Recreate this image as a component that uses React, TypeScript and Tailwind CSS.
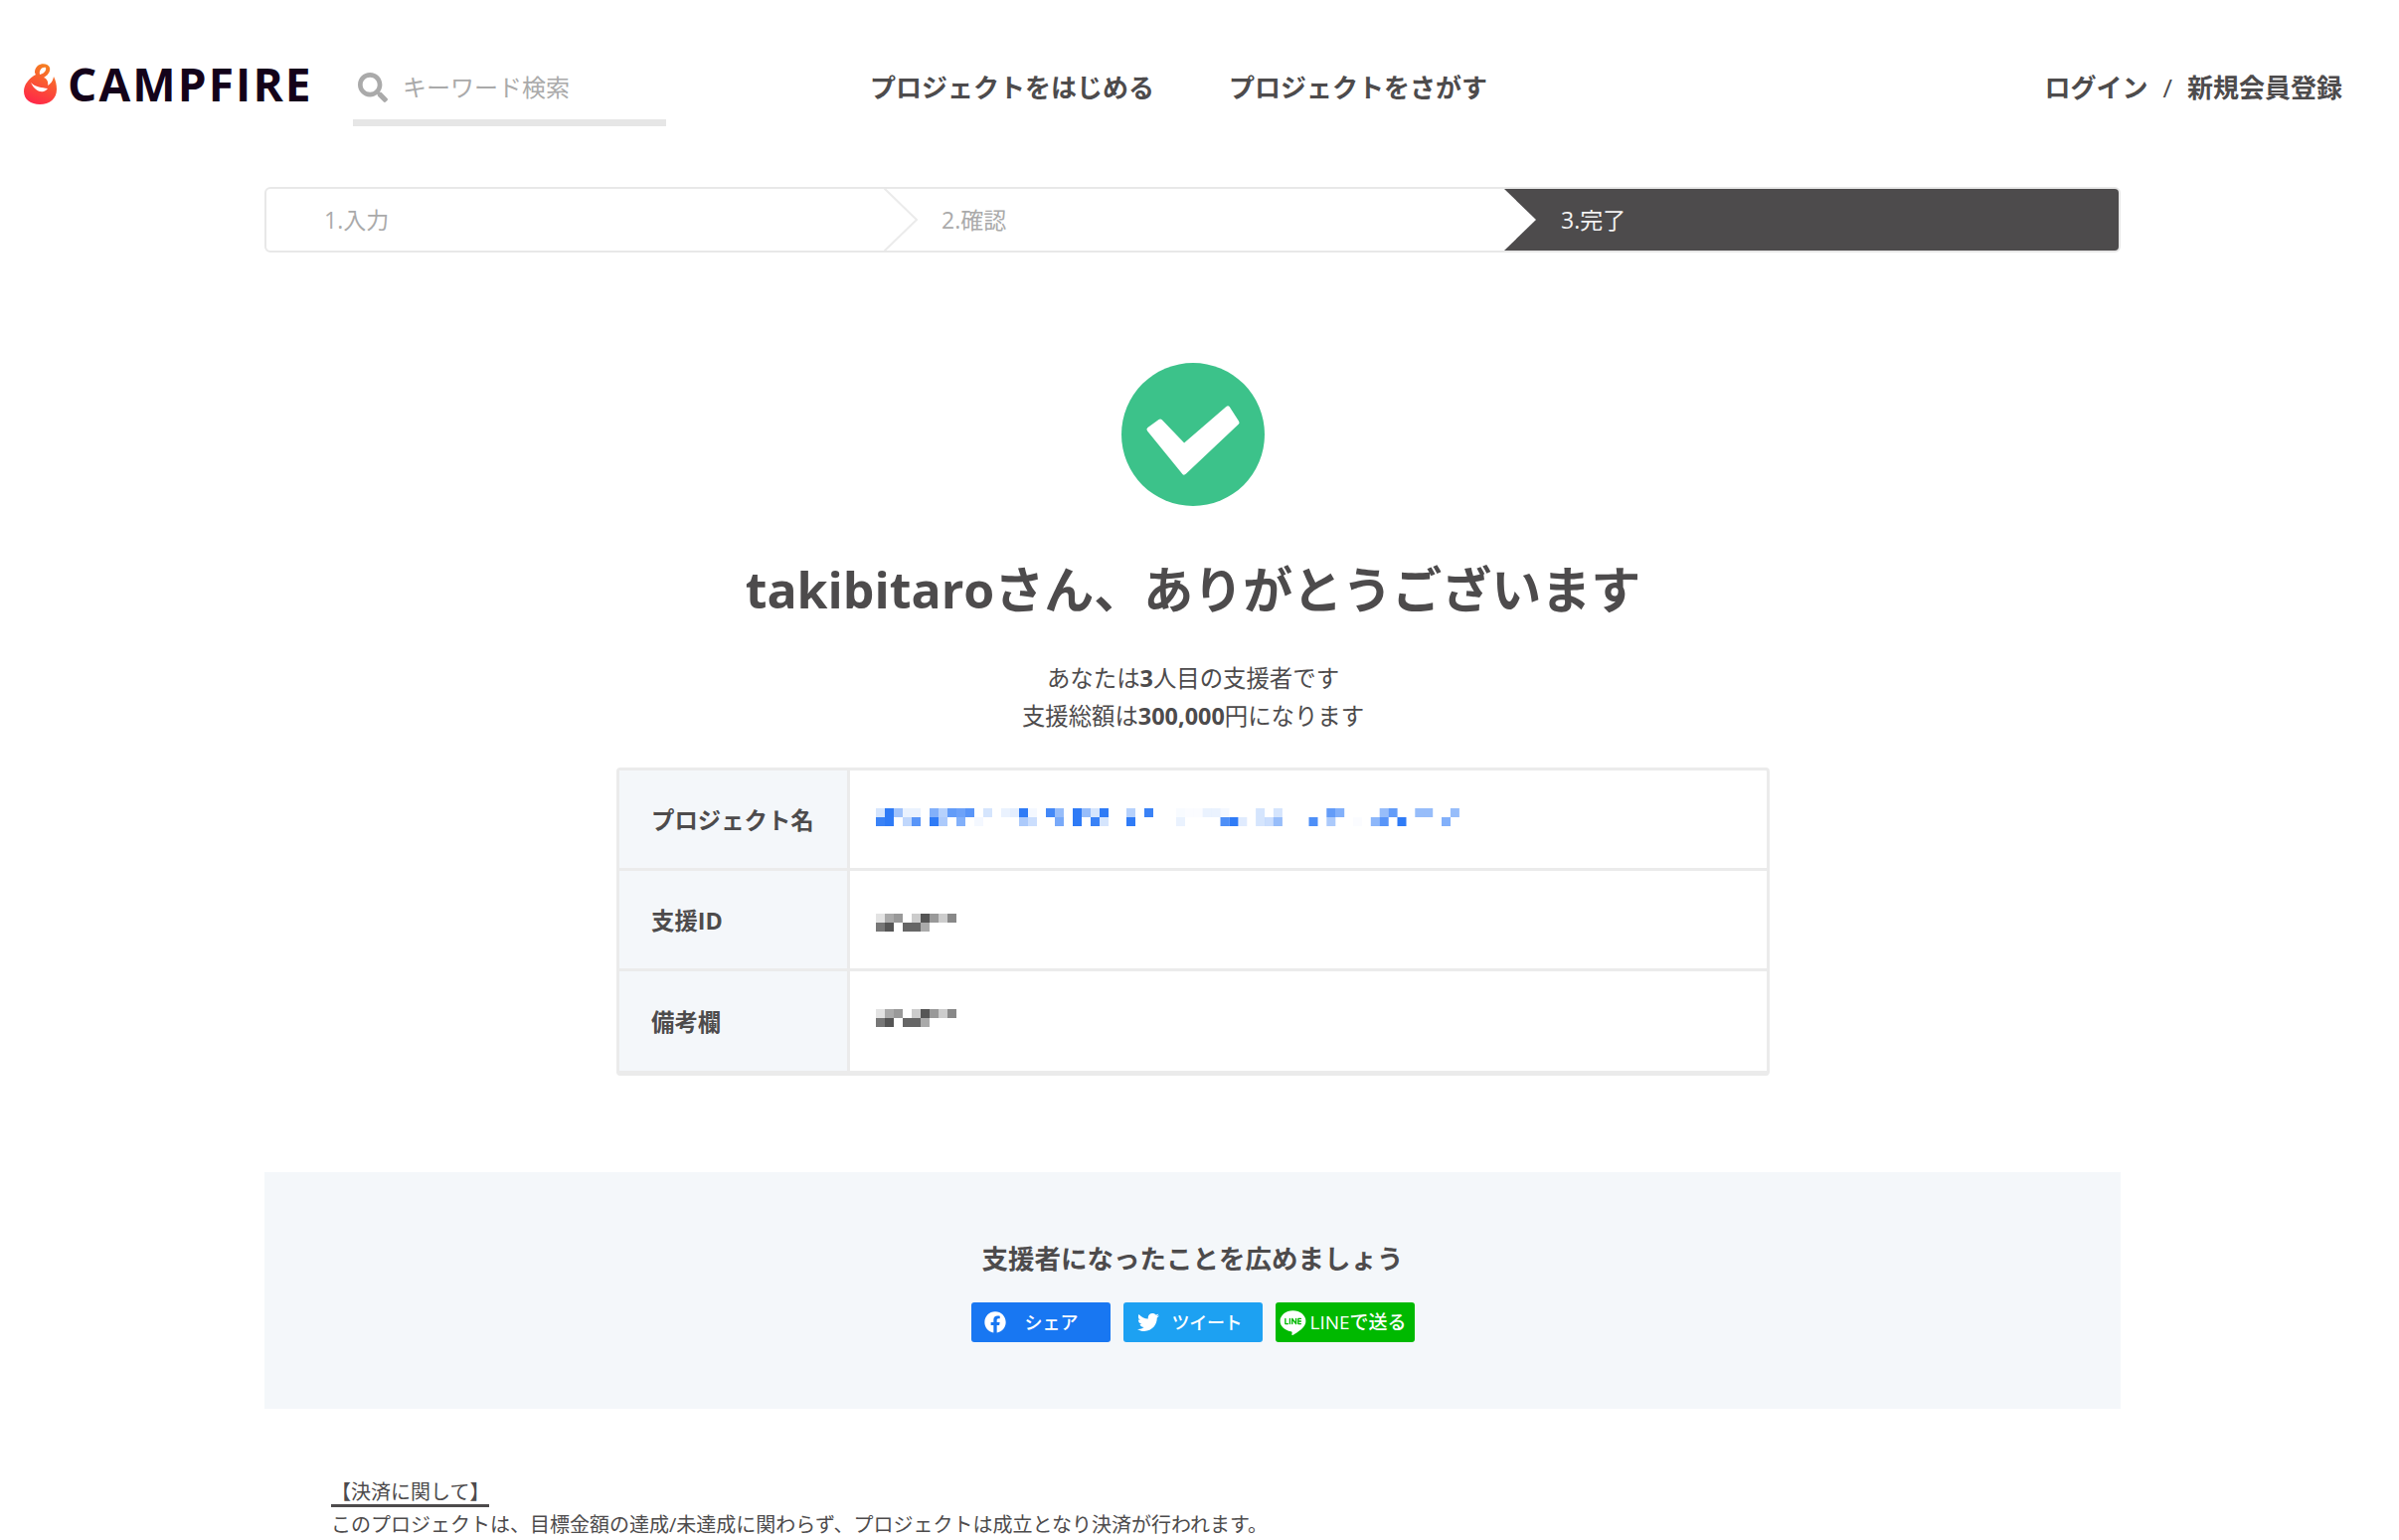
import { FaFacebook, FaSearch, FaTwitter } from 'react-icons/fa';
import { RiLineFill } from 'react-icons/ri';

const blueTop = [0.2, 1, 0.45, 0.1, 0.1, 0, 0.6, 0.35, 0.75, 0.7, 0.8, 0, 0.2, 0, 0.1, 0.13, 1, 0.05, 0, 0.9, 0.5, 0, 1, 0.5, 0.2, 1, 0, 0, 0.35, 0, 0.95];
const blueBottom = [0.95, 1, 0, 0.3, 0.8, 0, 1, 0.4, 0, 0.6, 0, 0.05, 0, 0, 0, 0, 0.4, 0.25, 0, 0, 0.65, 0, 1, 0, 0.95, 0.2, 0, 0, 1, 0, 0];
const blueTop2 = [0.03, 0.02, 0.02, 0.1, 0.1, 0.05, 0, 0, 0, 0.2, 0, 0.2, 0, 0, 0, 0, 0, 0.75, 0.6, 0, 0, 0, 0, 0.5, 0.75, 0, 0, 0.5, 0.5, 0, 0, 0.5];
const blueBottom2 = [0.1, 0, 0, 0, 0, 0.85, 1, 0.15, 0, 0.2, 0.25, 0.5, 0, 0, 0, 0.85, 0, 0.4, 0, 0, 0.02, 0, 0.55, 0.8, 0, 1, 0, 0, 0, 0, 0.6, 0];
const grayTop = ['#e3e3e3', '#aaaaaa', '#999999', '', '#cccccc', '#555555', '#999999', '#cccccc', '#888888'];
const grayBottom = ['#777777', '#555555', '', '#666666', '#666666', '#aaaaaa'];

function BlueMosaic() {
  const cells = (values: number[], start: number, step: number, y: number) =>
    values.map((o, i) => (o > 0 ? <rect key={`${start}-${y}-${i}`} x={start + i * step} y={y} width={9} height={9} fill="#2f7bf6" opacity={o} /> : null));
  return (
    <svg width={590} height={18} className="block">
      {cells(blueTop, 0, 9, 0)}
      {cells(blueBottom, 0, 9, 9)}
      {cells(blueTop2, 302, 8.9, 0)}
      {cells(blueBottom2, 302, 8.9, 9)}
    </svg>
  );
}

function GrayMosaic() {
  const cells = (values: string[], y: number) =>
    values.map((c, i) => (c ? <rect key={`${y}-${i}`} x={i * 9} y={y} width={9} height={9} fill={c} /> : null));
  return (
    <svg width={81} height={18} className="block">
      {cells(grayTop, 0)}
      {cells(grayBottom, 9)}
    </svg>
  );
}

function Flame() {
  return (
    <svg width={33} height={41} viewBox="0 0 33 41" className="shrink-0">
      <defs>
        <linearGradient id="flame" x1="0.7" y1="0" x2="0.35" y2="1">
          <stop offset="0" stopColor="#f58220" />
          <stop offset="1" stopColor="#ff2748" />
        </linearGradient>
      </defs>
      <path
        d="M12 11C5 15 0 21 0 28C0 36 7 41 16 41C26 41 33 35 33 26C33 21 32 17 30 13C29 18 27 20 24 22C25 18 23 15 20 14C24 12 27 8 26 4C25 0 18 -1 14 2C11 5 10 9 12 11Z"
        fill="url(#flame)"
      />
      <path d="M16 11C15 7 18 3 22 4C23 7 20 10 16 11Z" fill="#fff" />
      <path d="M7 19C12 24 18 24 24 25C21 30 12 30 7 19Z" fill="#fff" />
    </svg>
  );
}

function Row({ label, pad, last, children }: { label: string; pad: string; last?: boolean; children: React.ReactNode }) {
  return (
    <div className={`flex ${last ? 'h-[100px]' : 'h-[101px] border-b-[3px] border-[#ebebeb]'}`}>
      <div className="flex w-[232px] items-center border-r-[3px] border-[#ebebeb] bg-[#f4f7fa] pt-[3px] pl-[32px] text-[23.4px] font-bold">
        {label}
      </div>
      <div className={`flex-1 pl-[26px] ${pad}`}>{children}</div>
    </div>
  );
}

export default function App() {
  return (
    <div className="h-[1549px] overflow-hidden bg-white font-['Open_Sans','Noto_Sans_CJK_JP',sans-serif] text-[#4d4b4c]">
      <header className="flex h-[188px] items-start">
        <div className="mt-[63px] flex w-[312px] items-center pl-[24px]">
          <Flame />
          <span className="ml-[11px] text-[46px] leading-[42px] font-bold tracking-[2.1px] whitespace-nowrap text-[#14021a]">CAMPFIRE</span>
        </div>
        <div className="mt-[64px] ml-[43px] flex h-[63px] w-[315px] items-start border-b-[7px] border-[#e6e6e6] pl-[5px]">
          <div className="flex h-[48px] items-center gap-[15px]">
            <FaSearch className="size-[30px] text-[#aaaaaa]" />
            <input
              readOnly
              placeholder="キーワード検索"
              className="w-[240px] bg-transparent text-[24px] outline-none placeholder:text-[#aaaaaa]"
            />
          </div>
        </div>
        <nav className="mt-[64px] ml-[205px] flex h-[48px] items-center gap-[75px] text-[26px] font-bold">
          <span>プロジェクトをはじめる</span>
          <span>プロジェクトをさがす</span>
        </nav>
        <div className="mt-[64px] mr-[57px] ml-auto flex h-[48px] items-center gap-[15px] text-[26px] font-bold">
          <span>ログイン</span>
          <span className="font-normal">/</span>
          <span>新規会員登録</span>
        </div>
      </header>

      <div className="ml-[266px] flex h-[66px] w-[1867px] overflow-hidden rounded-[6px] border-2 border-[#e8e8e8] text-[23px] text-[#aaaaaa]">
        <div className="flex w-[621px] items-center pl-[58px]">1.入力</div>
        <div className="relative flex w-[624px] items-center pl-[58px]">
          <svg width={36} height={62} viewBox="0 0 36 62" className="absolute top-0 left-0">
            <path d="M0 -1L33 31L0 63" fill="none" stroke="#ebebeb" strokeWidth={2} />
          </svg>
          2.確認
        </div>
        <div className="relative flex flex-1 items-center bg-[#4d4b4c] pl-[57px] text-[#f2f2f2]">
          <svg width={34} height={62} viewBox="0 0 34 62" className="absolute top-0 left-0">
            <path d="M0 0L32 31L0 62Z" fill="#fff" />
          </svg>
          3.完了
        </div>
      </div>

      <main className="flex w-[2400px] flex-col items-center">
        <svg width={144} height={144} viewBox="0 0 144 144" className="mt-[111px]">
          <circle cx={72} cy={72} r={72} fill="#3cc28a" />
          <path
            d="M39 59L63 84L107 46L116 60L63 110L28 67Z"
            fill="#fff"
            stroke="#fff"
            strokeWidth={5}
            strokeLinejoin="round"
          />
        </svg>
        <h1 className="mt-[49px] text-[50px] leading-[70px] font-bold">takibitaroさん、ありがとうございます</h1>
        <div className="mt-[36px] text-center text-[23.4px] leading-[37.5px]">
          <p>
            あなたは<b>3</b>人目の支援者です
          </p>
          <p>
            支援総額は<b>300,000</b>円になります
          </p>
        </div>
        <div className="mt-[33px] w-[1160px] overflow-hidden rounded-[4px] border-x-[3px] border-t-[3px] border-b-[5px] border-[#ebebeb]">
          <Row label="プロジェクト名" pad="pt-[38px]">
            <BlueMosaic />
          </Row>
          <Row label="支援ID" pad="pt-[43px]">
            <GrayMosaic />
          </Row>
          <Row label="備考欄" pad="pt-[38px]" last>
            <GrayMosaic />
          </Row>
        </div>
      </main>

      <section className="ml-[266px] mt-[97px] flex h-[238px] w-[1867px] flex-col items-center bg-[#f4f7fa] pt-[67px]">
        <h2 className="text-[26.5px] leading-[40px] font-bold">支援者になったことを広めましょう</h2>
        <div className="mt-[24px] flex gap-[13px] text-[18px] font-medium text-white">
          <div className="flex h-[40px] w-[140px] items-center rounded-[3px] bg-[#1877f2] pl-[13px]">
            <FaFacebook className="size-[22px]" />
            <span className="ml-[19px]">シェア</span>
          </div>
          <div className="flex h-[40px] w-[140px] items-center rounded-[3px] bg-[#1da1f2] pl-[14px]">
            <FaTwitter className="size-[22px]" />
            <span className="ml-[13px] tracking-[-0.3px]">ツイート</span>
          </div>
          <div className="flex h-[40px] w-[140px] items-center rounded-[3px] bg-[#00b900] pl-[2px]">
            <RiLineFill className="size-[31px]" />
            <span className="ml-[2px] text-[19px]">LINEで送る</span>
          </div>
        </div>
      </section>

      <div className="mt-[70px] pl-[333px] text-[20px] leading-[28px]">
        <p className="inline-block border-b-[3px] border-[#4d4b4c] leading-[25px]">【決済に関して】</p>
        <p className="mt-[4px]">このプロジェクトは、目標金額の達成/未達成に関わらず、プロジェクトは成立となり決済が行われます。</p>
      </div>
    </div>
  );
}
